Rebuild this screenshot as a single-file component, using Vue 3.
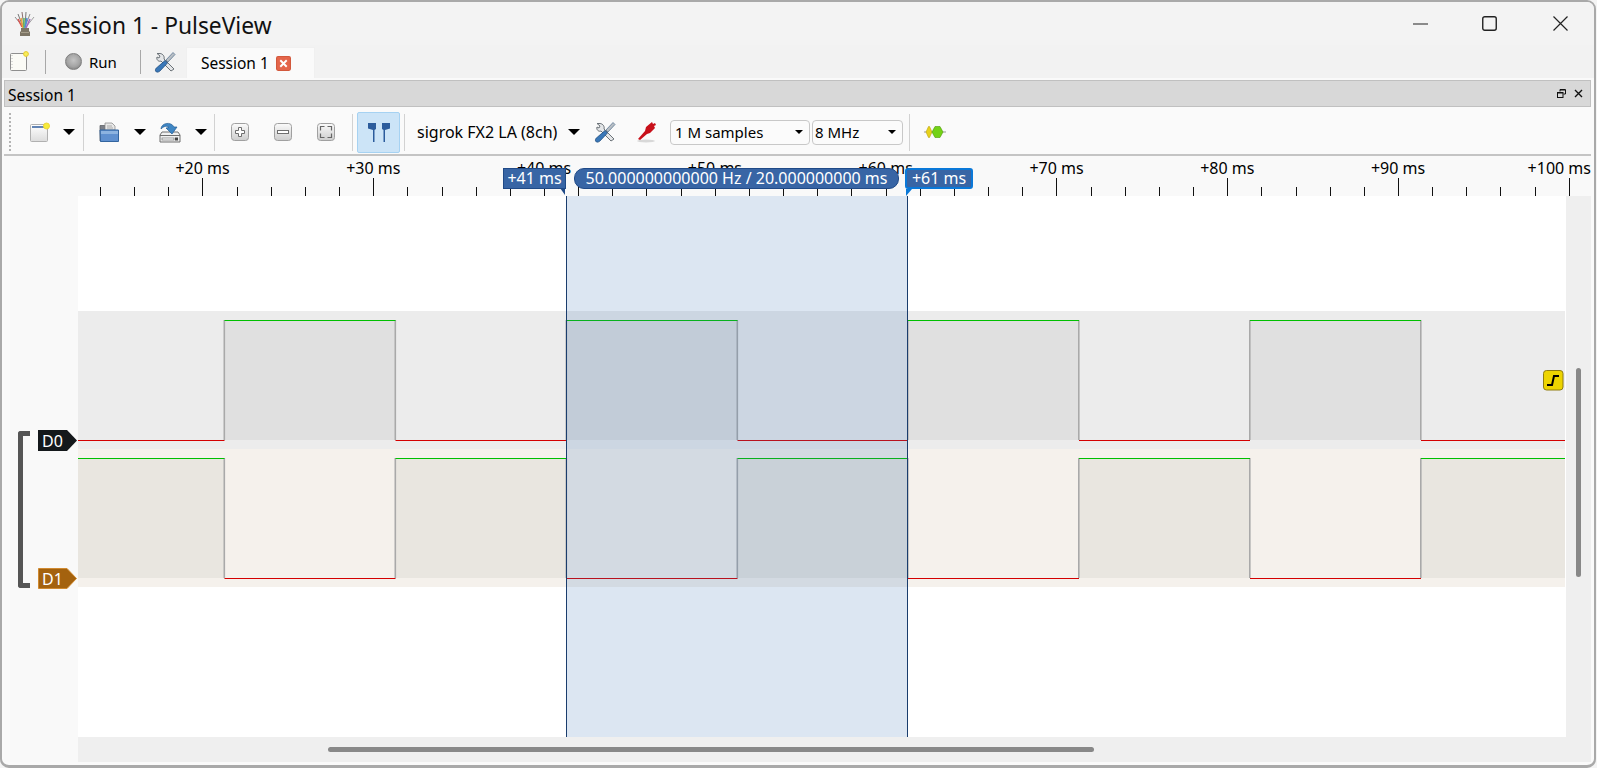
<script setup>
const edges = [224.5, 395.5, 566.5, 737.5, 908, 1079, 1250, 1421].map(x => x - 78)
const W = 1487
const spans = []
const all = [0, ...edges, W]
for (let i = 0; i < all.length - 1; i++) spans.push({ x: all[i], w: all[i + 1] - all[i], i })
const d0High = spans.filter(s => s.i % 2 === 1)
const d0Low = spans.filter(s => s.i % 2 === 0)
const d1High = d0Low
const d1Low = d0High

const pos = ms => 1569.3 - (100 - ms) * 17.08 - 78
const ticks = []
for (let k = 0; k < 44; k++) {
  const ms = 14 + k * 2
  ticks.push({ x: Math.floor(pos(ms)) + 0.5, major: ms % 10 === 0 })
}
const labels = [20, 30, 40, 50, 60, 70, 80, 90].map(ms => ({
  text: `+${ms} ms`,
  x: pos(ms) - 0.4
}))
</script>

<template>
  <div class="page">
    <div class="window">
      <header class="titlebar">
        <svg class="logo" width="22" height="26" viewBox="0 0 22 26">
          <g fill="none" stroke-width="1">
            <path d="M9 16 1 6" stroke="#8f8f8f" />
            <path d="M9 16 4 3" stroke="#777" />
            <path d="M10 16 8 1" stroke="#8a6f6f" />
            <path d="M11 16 12 1" stroke="#777" />
            <path d="M11 16 16 3" stroke="#8f8f8f" />
            <path d="M12 16 20 6" stroke="#9f9f9f" />
            <path d="M8 16 4 8" stroke="#d9534f" stroke-width="1.5" />
            <path d="M9 17 7 7" stroke="#e8a33d" stroke-width="1.5" />
            <path d="M10 17 10 7" stroke="#5cb85c" stroke-width="1.5" />
            <path d="M11 17 13 7" stroke="#4a90d9" stroke-width="1.5" />
            <path d="M12 17 16 8" stroke="#a569bd" stroke-width="1.5" />
          </g>
          <path d="M7 17h8v3l1 1v4H6v-4l1-1z" fill="#7d7565" />
          <path d="M7 21h8v1H7z" fill="#a59d8a" />
        </svg>
        <span class="title">Session 1 - PulseView</span>
        <div class="grow"></div>
        <svg class="win-min" width="15" height="2" viewBox="0 0 15 2"><path d="M0 1h15" stroke="#222" stroke-width="1.2" /></svg>
        <svg class="win-max" width="15" height="15" viewBox="0 0 15 15"><rect x=".75" y=".75" width="13.5" height="13.5" rx="2" fill="none" stroke="#222" stroke-width="1.4" /></svg>
        <svg class="win-close" width="15" height="15" viewBox="0 0 15 15"><path d="M.5.5l14 14M14.5.5l-14 14" stroke="#222" stroke-width="1.2" /></svg>
      </header>

      <nav class="tabbar">
        <svg class="m8" width="19" height="21" viewBox="0 0 19 21">
          <rect x=".5" y="2.5" width="16" height="17" rx="1" fill="#fbfbf6" stroke="#8f8f8f" />
          <path d="M2 4v14" stroke="#bbb" stroke-dasharray="1 2" />
          <circle cx="16" cy="3" r="2.4" fill="#f7ee5a" stroke="#e6c92f" />
        </svg>
        <i class="tsep m16"></i>
        <span class="led m19"></span>
        <span class="m7 txt run">Run</span>
        <i class="tsep m23"></i>
        <svg class="m13" width="22" height="22" viewBox="0 0 22 22">
          <path d="M3 2.500 6 5 5 7l-2-1c-1 3 2 5 4 4l10 10 3-2-10-10c1-3-2-6-5-5.500z" fill="#e4e6e8" stroke="#6b7278" />
          <path d="M19 1.500 21 3.500 14 11l-2-2z" fill="#b8bec4" stroke="#4a6a8a" stroke-width=".7" />
          <path d="M11 9.500 13.500 12 6 20c-1.500 1.500-4 1.500-4.500 0S2 17 3.500 16z" fill="#3a78b8" stroke="#1e4a7c" stroke-width=".7" />
        </svg>
        <div class="tab m10">
          <span class="txt">Session 1</span>
          <svg class="m7" width="15" height="15" viewBox="0 0 14 14">
            <rect x=".5" y=".5" width="13" height="13" rx="1.500" fill="#e4654a" stroke="#d2583c" />
            <path d="M4 4l6 6M10 4l-6 6" stroke="#fff" stroke-width="1.800" />
          </svg>
        </div>
      </nav>

      <section class="dock">
        <div class="dock-head">
          <span class="txt">Session 1</span>
          <div class="grow"></div>
          <svg width="9" height="9" viewBox="0 0 9 9" class="dock-float">
            <path d="M3 2.500V.5h5.500V5H6.500" fill="none" stroke="#111" />
            <rect x=".5" y="3.500" width="5.500" height="5" fill="none" stroke="#111" />
            <path d="M0 4h6M3 1h5" stroke="#111" />
          </svg>
          <svg width="9" height="9" viewBox="0 0 9 9" class="dock-close">
            <path d="M1 1l7 7M8 1 1 8" stroke="#111" stroke-width="1.400" />
          </svg>
        </div>

        <div class="toolbar">
          <i class="grip"></i>
          <svg class="m19" width="20" height="20" viewBox="0 0 20 20">
            <defs>
              <linearGradient id="docg" x1="0" y1="0" x2="0" y2="1"><stop offset="0" stop-color="#fff" /><stop offset="1" stop-color="#dcdcdc" /></linearGradient>
              <linearGradient id="btng" x1="0" y1="0" x2="0" y2="1"><stop offset="0" stop-color="#fbfbfb" /><stop offset="1" stop-color="#cdcdcd" /></linearGradient>
            </defs>
            <rect x=".5" y="2.500" width="17" height="17" rx="1" fill="url(#docg)" stroke="#b0b0b0" />
            <path d="M2 5h14" stroke="#2f5c9c" stroke-width="1.600" />
            <circle cx="16.500" cy="4" r="3" fill="#f5ec3a" stroke="#eed33a" />
          </svg>
          <i class="arrow m13"></i>
          <i class="sep m8"></i>
          <svg class="m15" width="20" height="21" viewBox="0 0 20 21">
            <path d="M1 3.500h5V19H1z" fill="#7b7f88" stroke="#5f6368" stroke-width=".8" />
            <path d="M6 1h7l3 3v4H6z" fill="#e8e8e8" stroke="#8d8d8d" stroke-width=".8" />
            <path d="M8 4h5M8 6h6" stroke="#aaa" />
            <path d="M1 8h18.500v11.500H1.500z" fill="#5f90cf" stroke="#33659f" />
            <path d="M2 9h17v3H2z" fill="#8cb3e0" />
          </svg>
          <i class="arrow m15"></i>
          <svg class="m13" width="22" height="22" viewBox="0 0 22 22">
            <path d="M3 11 1 14v7h20v-7l-2-3z" fill="#f0f0f0" stroke="#6f6f6f" />
            <path d="M1 14.500h20" stroke="#6f6f6f" />
            <rect x="3" y="17" width="12" height="2" fill="#fff" stroke="#777" stroke-width=".7" />
            <rect x="16" y="16.500" width="3" height="3" fill="#444" />
            <path d="M2 8C2 2 12 0 15 6l3 0-5 7-6-6 3-.5C8 4.500 5 5 2 8z" fill="#3f86c4" stroke="#235d96" stroke-width=".7" />
          </svg>
          <i class="arrow m14"></i>
          <i class="sep m7"></i>
          <svg class="m16" width="18" height="18" viewBox="0 0 18 18">
            <rect x=".5" y=".5" width="17" height="17" rx="3" fill="url(#btng)" stroke="#a0a0a0" />
            <path d="M7.500 4.500h3V7.500h3v3h-3v3h-3v-3h-3v-3h3z" fill="#fff" stroke="#6e6e6e" />
          </svg>
          <svg class="m25" width="18" height="18" viewBox="0 0 18 18">
            <rect x=".5" y=".5" width="17" height="17" rx="3" fill="url(#btng)" stroke="#a0a0a0" />
            <rect x="3.500" y="7.500" width="11" height="3" fill="#fff" stroke="#6e6e6e" />
          </svg>
          <svg class="m25" width="18" height="18" viewBox="0 0 18 18">
            <rect x=".5" y=".5" width="17" height="17" rx="3" fill="url(#btng)" stroke="#a0a0a0" />
            <path d="M7.500 3.500h-4v4M10.500 3.500h4v4M7.500 14.500h-4v-4M10.500 14.500h4v-4" fill="none" stroke="#666" stroke-width="1.200" />
          </svg>
          <i class="sep m17"></i>
          <div class="toggle m4">
            <svg width="22" height="19" viewBox="0 0 22 19">
              <path d="M0 0h8v6L6.500 7V19H5V7L0 5.500z" fill="#2c5c9c" />
              <path d="M22 0h-8v6l1.500 1V19H17V7l5-1.500z" fill="#2c5c9c" />
            </svg>
          </div>
          <i class="sep m4"></i>
          <span class="txt m12 dev">sigrok FX2 LA (8ch)</span>
          <i class="arrow m11"></i>
          <svg class="m14" width="22" height="22" viewBox="0 0 22 22">
            <path d="M3 2.500 6 5 5 7l-2-1c-1 3 2 5 4 4l10 10 3-2-10-10c1-3-2-6-5-5.500z" fill="#e4e6e8" stroke="#6b7278" />
            <path d="M19 1.500 21 3.500 14 11l-2-2z" fill="#b8bec4" stroke="#4a6a8a" stroke-width=".7" />
            <path d="M11 9.500 13.500 12 6 20c-1.500 1.500-4 1.500-4.500 0S2 17 3.500 16z" fill="#3a78b8" stroke="#1e4a7c" stroke-width=".7" />
          </svg>
          <svg class="m21" width="21" height="22" viewBox="0 0 21 22">
            <ellipse cx="9" cy="20" rx="9" ry="1.500" fill="#d8d8d8" />
            <path d="M1 18 8 10 9 6l6-5 1 2 2-1 1 2-2 1 1 2-5 5-3 1-7 6z" fill="#c8101a" />
          </svg>
          <div class="combo m12 c1"><span>1 M samples</span><i class="mini"></i></div>
          <div class="combo m2 c2"><span>8 MHz</span><i class="mini"></i></div>
          <i class="sep m6"></i>
          <svg class="m14" width="22" height="14" viewBox="0 0 22 14">
            <path d="M0 7h22" stroke="#999" />
            <path d="M2 7 4.500 1.500h1L8 7l-2.500 5.500h-1z" fill="#e8d21a" stroke="#b8a210" stroke-width=".6" />
            <path d="M8 7l3-5.500h5L19 7l-3 5.500h-5z" fill="#73d216" stroke="#4e9a06" stroke-width=".6" />
          </svg>
        </div>

        <div class="view">
          <aside class="side">
            <div class="bracket"></div>
            <svg class="chan d0" width="39" height="21" viewBox="0 0 39 21">
              <path d="M0 0h29l10 10.500L29 21H0z" fill="#14181b" />
              <text x="4" y="16.500" class="chan-text">D0</text>
            </svg>
            <svg class="chan d1" width="39" height="21" viewBox="0 0 39 21">
              <path d="M.5.500h28.500l9.500 10-9.500 10H.5z" fill="#a4620e" stroke="#d08a30" />
              <text x="4" y="16.500" class="chan-text">D1</text>
            </svg>
          </aside>

          <div class="ruler">
            <svg class="ruler-svg" width="1513" height="40" viewBox="0 0 1513 40">
              <g v-for="(t, i) in ticks" :key="i">
                <path :d="`M${t.x} ${t.major ? 22 : 31}V40`" stroke="#111" />
              </g>
              <text v-for="l in labels" :key="l.text" :x="l.x" y="18" text-anchor="middle" class="r-label">{{ l.text }}</text>
              <text x="1513" y="18" text-anchor="end" class="r-label">+100 ms</text>
            </svg>
            <div class="flag f-left">+41 ms<svg class="tail tl" width="6" height="8" viewBox="0 0 6 8"><path d="M0 0h5v7z" fill="#204a87" /></svg></div>
            <div class="flag f-mid">50.000000000000 Hz / 20.000000000 ms</div>
            <div class="flag f-right">+61 ms<svg class="tail tr" width="7" height="8" viewBox="0 0 7 8"><path d="M7 0H1v7z" fill="#0a78d8" /></svg></div>
          </div>

          <div class="canvas">
            <svg width="1488" height="541" viewBox="0 0 1488 541" class="trace">
              <rect x="0" y="115" width="1487" height="138" fill="#ececec" />
              <rect x="0" y="253" width="1487" height="138" fill="#f5f1ec" />
              <rect v-for="s in d0High" :key="'a' + s.i" :x="s.x" y="124" :width="s.w" height="120" fill="#e0e0e0" />
              <rect v-for="s in d1High" :key="'b' + s.i" :x="s.x" y="262" :width="s.w" height="120" fill="#e9e6e0" />
              <g fill="#a9a9a9">
                <rect v-for="x in edges" :key="'c' + x" :x="x - 1" y="124" width="1.600" height="120" />
                <rect v-for="x in edges" :key="'d' + x" :x="x - 1" y="262" width="1.600" height="120" />
              </g>
              <g fill="#00c000">
                <rect v-for="s in d0High" :key="'e' + s.i" :x="s.x" y="124" :width="s.w" height="1" />
                <rect v-for="s in d1High" :key="'f' + s.i" :x="s.x" y="262" :width="s.w" height="1" />
              </g>
              <g fill="#d40000">
                <rect v-for="s in d0Low" :key="'g' + s.i" :x="s.x" y="244" :width="s.w" height="1" />
                <rect v-for="s in d1Low" :key="'h' + s.i" :x="s.x" y="382" :width="s.w" height="1" />
              </g>
              <rect x="488" y="0" width="341" height="541" fill="rgb(50,105,175)" fill-opacity=".17" />
              <rect x="488" y="0" width="1" height="541" fill="#1a3d6d" />
              <rect x="829" y="0" width="1" height="541" fill="#1a3d6d" />
            </svg>
            <svg class="trigger" width="21" height="21" viewBox="0 0 21 21">
              <rect x=".5" y=".5" width="19.500" height="19.500" rx="3" fill="#edd400" stroke="#8f7d10" />
              <path d="M4 15h5l2-9h5" fill="none" stroke="#000" stroke-width="2" />
            </svg>
          </div>

          <div class="vscroll"><div class="vthumb"></div></div>
          <div class="hscroll"><div class="hthumb"></div></div>
        </div>
      </section>
    </div>
  </div>
</template>

<style>
html, body { margin: 0; padding: 0; background: #f4f4f4; overflow: hidden; }
</style>

<style scoped>
.page {
  width: 1597px;
  height: 768px;
  font-family: "Noto Sans", "Open Sans", sans-serif;
  font-size: 15px;
  color: #000;
}
.window {
  box-sizing: border-box;
  width: 1596px;
  height: 768px;
  border: 2px solid #a9a9a9;
  border-bottom-width: 3px;
  border-radius: 9px;
  background: #fafafa;
  display: flex;
  flex-direction: column;
  overflow: hidden;
}
.grow { flex: 1; }
.txt { white-space: nowrap; line-height: 20px; font-size: 15.500px; }
.run { font-size: 15px; }

.titlebar {
  height: 43px;
  flex: none;
  background: #f3f3f3;
  display: flex;
  align-items: center;
}
.logo { margin-left: 12px; }
.title {
  margin-left: 9px;
  margin-top: 3px;
  font-size: 22.800px;
  color: #111;
  white-space: nowrap;
}
.win-min { margin-right: 54px; }
.win-max { margin-right: 56px; }
.win-close { margin-right: 26px; }

.tabbar {
  height: 33px;
  flex: none;
  background: #f2f2f2;
  display: flex;
  align-items: center;
}
.tsep { width: 1px; height: 24px; background: #a8a8a8; display: block; }
.led {
  width: 17px;
  height: 17px;
  border-radius: 50%;
  background: radial-gradient(circle at 50% 42%, #c4c4c4 0, #a4a4a4 55%, #6f6f6f 100%);
  border: 1px solid #7f7f7f;
  box-sizing: border-box;
}
.tab {
  align-self: flex-end;
  box-sizing: border-box;
  width: 129px;
  height: 31px;
  padding-left: 14px;
  background: #fafafa;
  border: 1px solid #f0f0f0;
  border-bottom: 0;
  display: flex;
  align-items: center;
}

.dock {
  margin: 2px 3px 3px 2px;
  flex: 1;
  display: flex;
  flex-direction: column;
}
.dock-head {
  box-sizing: border-box;
  height: 27px;
  flex: none;
  background: #d8d8d8;
  border: 1px solid #c0c0c0;
  padding: 0 7px 0 3px;
  display: flex;
  align-items: center;
}
.dock-head .txt { margin-top: 2px; }
.dock-float { margin-right: 8px; }
.toolbar {
  box-sizing: border-box;
  height: 49px;
  flex: none;
  background: #fafafa;
  border-bottom: 2px solid #c4c4c4;
  padding: 3px 0 0 5px;
  display: flex;
  align-items: center;
}
.grip { width: 2px; height: 38px; border-left: 2px dotted #b4b4b4; display: block; box-sizing: border-box; }
.sep { width: 1px; height: 37px; background: #d2d2d2; display: block; }
.arrow {
  display: block;
  width: 0;
  height: 0;
  border-left: 6px solid transparent;
  border-right: 6px solid transparent;
  border-top: 6px solid #000;
}
.toggle {
  box-sizing: border-box;
  width: 43px;
  height: 41px;
  background: #cce4f7;
  border: 1px solid #a6d2f2;
  border-radius: 2px;
  display: flex;
  align-items: center;
  justify-content: center;
}
.dev { width: 140px; font-size: 16px; }
.combo {
  box-sizing: border-box;
  height: 25px;
  border: 1px solid #c8c8c8;
  border-radius: 4px;
  background: #fbfbfb;
  display: flex;
  align-items: center;
  justify-content: space-between;
  white-space: nowrap;
}
.c1 { width: 140px; padding: 0 6px 0 4px; }
.c2 { width: 91px; padding: 0 6px 0 2px; }
.mini {
  display: block;
  width: 0;
  height: 0;
  border-left: 4px solid transparent;
  border-right: 4px solid transparent;
  border-top: 4px solid #000;
}

.m2 { margin-left: 2px; }
.m4 { margin-left: 4px; }
.m6 { margin-left: 6px; }
.m7 { margin-left: 7px; }
.m8 { margin-left: 8px; }
.m10 { margin-left: 10px; }
.m11 { margin-left: 11px; }
.m12 { margin-left: 12px; }
.m13 { margin-left: 13px; }
.m14 { margin-left: 14px; }
.m15 { margin-left: 15px; }
.m16 { margin-left: 16px; }
.m17 { margin-left: 17px; }
.m19 { margin-left: 19px; }
.m21 { margin-left: 21px; }
.m23 { margin-left: 23px; }
.m25 { margin-left: 25px; }

.view {
  flex: none;
  display: grid;
  grid-template-columns: 74px 1488px 25px;
  grid-template-rows: 40px 541px 25px;
  background: #f9f9f9;
}
.side { grid-column: 1; grid-row: 1 / 4; position: relative; background: #f9f9f9; }
.bracket {
  position: absolute;
  left: 14px;
  top: 275px;
  width: 12px;
  height: 157px;
  box-sizing: border-box;
  border: 5px solid #555;
  border-right: 0;
  border-radius: 3px 0 0 3px;
}
.chan { position: absolute; left: 34px; }
.d0 { top: 274px; }
.d1 { top: 412px; }
.chan-text { fill: #fff; font-size: 16px; font-family: "Noto Sans", sans-serif; }

.ruler { grid-column: 2 / 4; grid-row: 1; position: relative; background: #f9f9f9; }
.ruler-svg { display: block; }
.r-label { font-size: 16px; fill: #000; font-family: "Noto Sans", sans-serif; }
.flag {
  position: absolute;
  top: 12px;
  height: 21px;
  box-sizing: border-box;
  background: #3865a5;
  border: 1px solid #204a87;
  color: #fff;
  font-size: 16px;
  line-height: 19px;
  text-align: center;
  white-space: nowrap;
}
.f-left { left: 425px; width: 63px; }
.f-mid { left: 496px; width: 325px; border-radius: 10px; }
.f-right { left: 827px; width: 68px; border: 2px solid #0a78d8; border-radius: 3px; line-height: 17px; }
.tail { position: absolute; top: 19px; }
.tl { right: -1px; }
.tr { left: -2px; }

.canvas { grid-column: 2; grid-row: 2; position: relative; background: #fff; }
.trace { display: block; }
.trigger { position: absolute; left: 1465px; top: 174px; }

.vscroll { grid-column: 3; grid-row: 2; background: #efefef; position: relative; padding-left: 10px; padding-top: 172px; }
.vthumb { width: 5px; height: 209px; background: #888; border-radius: 3px; }
.hscroll { grid-column: 2 / 4; grid-row: 3; background: #efefef; padding: 10px 0 0 250px; }
.hthumb { width: 766px; height: 5px; background: #888; border-radius: 3px; }
</style>
